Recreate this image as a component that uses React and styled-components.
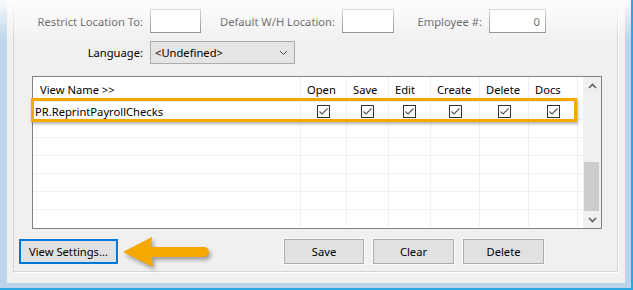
import React from "react";
import styled, { createGlobalStyle } from "styled-components";

const GlobalStyle = createGlobalStyle`
  * { box-sizing: border-box; }
  body {
    margin: 0;
    font-family: "Noto Sans", "Open Sans", sans-serif;
    font-size: 11.2px;
    color: #000;
  }
`;

const COLUMNS = ["Open", "Save", "Edit", "Create", "Delete", "Docs"];
const TEMPLATE = "268px 46px 42px 42px 49px 49px 49px 5px";

const Frame = styled.div`
  position: relative;
  width: 633px;
  height: 290px;
  display: flex;
  background: #bcd4ec;
  padding: 0 6px 5px 7px;
  border-right: 2px solid #2aa9e0;
  border-bottom: 2px solid #2aa9e0;
`;

const TopFade = styled.div`
  position: absolute;
  left: 0;
  right: 0;
  top: 0;
  height: 42px;
  pointer-events: none;
  background: linear-gradient(
    to bottom,
    rgba(255, 255, 255, 0.9),
    rgba(255, 255, 255, 0)
  );
`;

const Client = styled.div`
  flex: 1;
  display: flex;
  background: #f0f0f0;
  padding: 0 7px 11px 6px;
`;

const Group = styled.div`
  flex: 1;
  display: flex;
  flex-direction: column;
  border: 1px solid #d5d5d5;
  border-top: none;
  box-shadow: 1px 1px 0 #fff;
  padding: 9px 0 7px 0;
`;

const FieldRow = styled.div`
  display: flex;
  align-items: center;
  height: ${(p) => p.$h}px;
  margin-top: ${(p) => p.$mt || 0}px;
`;

const Label = styled.span`
  width: ${(p) => p.$w}px;
  text-align: right;
  margin-right: 7px;
  white-space: nowrap;
`;

const TextBox = styled.div`
  width: ${(p) => p.$w}px;
  height: 100%;
  background: #fff;
  border: 1px solid #7a7a7a;
  display: flex;
  align-items: center;
  justify-content: flex-end;
  padding-right: 5px;
`;

const Select = styled.div`
  width: 145px;
  height: 100%;
  background: #e5e5e5;
  border: 1px solid #acacac;
  display: flex;
  align-items: center;
  justify-content: space-between;
  padding: 0 6px 0 4px;
`;

const GridBox = styled.div`
  position: relative;
  margin: 12px 0 0 18px;
  width: 570px;
  height: 153px;
  border: 1px solid #828282;
  background: #fff;
  display: flex;
`;

const Table = styled.div`
  width: 550px;
  display: flex;
  flex-direction: column;
`;

const Row = styled.div`
  display: grid;
  grid-template-columns: ${TEMPLATE};
  height: ${(p) => (p.$head ? 25 : 18)}px;
  border-bottom: 1px solid ${(p) => (p.$last ? "transparent" : "#f0f0f0")};
`;

const Cell = styled.div`
  display: flex;
  align-items: center;
  justify-content: ${(p) => (p.$head ? "flex-start" : "center")};
  padding-left: ${(p) => p.$pl || 0}px;
  padding-top: ${(p) => (p.$head ? 0 : 1)}px;
  border-right: 1px solid ${(p) => (p.$end ? "transparent" : "#f0f0f0")};
  white-space: nowrap;
`;

const NameCell = styled(Cell)`
  justify-content: flex-start;
`;

const CheckBox = styled.svg`
  width: 13px;
  height: 13px;
  display: block;
`;

const Highlight = styled.div`
  position: absolute;
  left: -2px;
  top: 21px;
  width: 546px;
  height: 24px;
  border: 3px solid #f5a800;
  box-shadow: 1px 2px 3px rgba(0, 0, 0, 0.3);
  pointer-events: none;
`;

const ScrollBar = styled.div`
  width: 18px;
  background: #f0f0f0;
  display: flex;
  flex-direction: column;
`;

const ArrowBtn = styled.div`
  height: 17px;
  display: flex;
  align-items: center;
  justify-content: center;
  padding-left: 1px;
`;

const Track = styled.div`
  flex: 1;
  display: flex;
  flex-direction: column;
  justify-content: flex-end;
  padding: 0 2px 0 1px;
`;

const Thumb = styled.div`
  height: 49px;
  background: #cdcdcd;
`;

const ButtonRow = styled.div`
  display: flex;
  align-items: center;
  margin-top: 10px;
  padding-left: 5px;
  height: 25px;
`;

const Button = styled.button`
  font: inherit;
  color: #000;
  width: ${(p) => p.$w}px;
  height: 25px;
  padding: 0;
  background: #e1e1e1;
  border: ${(p) => (p.$focus ? "2px solid #0078d7" : "1px solid #adadad")};
  box-shadow: ${(p) => (p.$focus ? "none" : "0 0 0 1px #fbfbfb")};
`;

const Callout = styled.svg`
  width: 100px;
  height: 40px;
  margin: -8px 0;
  overflow: visible;
  filter: drop-shadow(2px 3px 2px rgba(0, 0, 0, 0.35));
`;

const Actions = styled.div`
  display: flex;
  gap: 9px;
  margin-left: 66px;
`;

const Chevron = ({ up }) => (
  <svg width="9" height="6" viewBox="0 0 9 6">
    <polyline
      points={up ? "1,5 4.5,1.5 8,5" : "1,1 4.5,4.5 8,1"}
      fill="none"
      stroke="#606060"
      strokeWidth="1.6"
    />
  </svg>
);

const Check = () => (
  <CheckBox viewBox="0 0 13 13">
    <rect x="0.5" y="0.5" width="12" height="12" fill="#fff" stroke="#333" />
    <polyline
      points="2.5,6.5 5,9 10.5,3.5"
      fill="none"
      stroke="#555"
      strokeWidth="1.1"
    />
  </CheckBox>
);

const rows = [{ name: "PR.ReprintPayrollChecks", checked: true }, {}, {}, {}, {}, {}, {}];

export default function App() {
  return (
    <>
      <GlobalStyle />
      <Frame>
        <Client>
          <Group>
            <FieldRow $h={24}>
              <Label $w={129}>Restrict Location To:</Label>
              <TextBox $w={51} />
              <Label $w={134}>Default W/H Location:</Label>
              <TextBox $w={52} />
              <Label $w={88}>Employee #:</Label>
              <TextBox $w={57}>0</TextBox>
            </FieldRow>
            <FieldRow $h={23} $mt={8}>
              <Label $w={129}>Language:</Label>
              <Select>
                <span>&lt;Undefined&gt;</span>
                <svg width="9" height="6" viewBox="0 0 9 6">
                  <polyline points="1,1 4.5,4.5 8,1" fill="none" stroke="#444" strokeWidth="1" />
                </svg>
              </Select>
            </FieldRow>

            <GridBox>
              <Table>
                <Row $head>
                  <Cell $head $pl={7}>View Name &gt;&gt;</Cell>
                  {COLUMNS.map((c) => (
                    <Cell $head $pl={6} key={c}>{c}</Cell>
                  ))}
                  <Cell $head $end />
                </Row>
                {rows.map((r, i) => (
                  <Row key={i} $last={i === rows.length - 1}>
                    <NameCell $pl={2}>{r.name}</NameCell>
                    {COLUMNS.map((c) => (
                      <Cell key={c}>{r.checked && <Check />}</Cell>
                    ))}
                    <Cell $end />
                  </Row>
                ))}
              </Table>
              <ScrollBar>
                <ArrowBtn><Chevron up /></ArrowBtn>
                <Track><Thumb /></Track>
                <ArrowBtn><Chevron /></ArrowBtn>
              </ScrollBar>
              <Highlight />
            </GridBox>

            <ButtonRow>
              <Button $w={99} $focus>View Settings...</Button>
              <Callout viewBox="0 0 100 40">
                <path
                  d="M5 20 L34 5 L33 15 L86 15 A5 5 0 0 1 86 25 L34 25 L35 35 Z"
                  fill="#f5a800"
                />
              </Callout>
              <Actions>
                <Button $w={80}>Save</Button>
                <Button $w={81}>Clear</Button>
                <Button $w={81}>Delete</Button>
              </Actions>
            </ButtonRow>
          </Group>
        </Client>
        <TopFade />
      </Frame>
    </>
  );
}
